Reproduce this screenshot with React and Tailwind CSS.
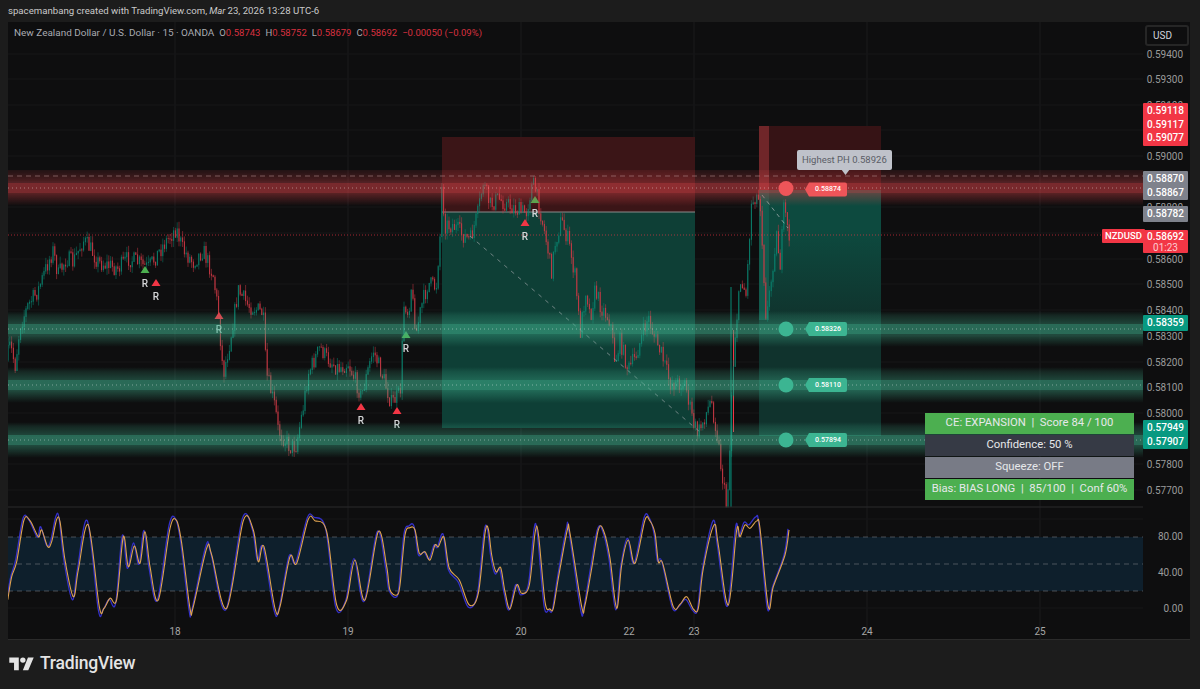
import React from "react";

const font = { fontFamily: '"Roboto", "Liberation Sans", sans-serif' };

// hand traced price path, page pixels
const pricePath = [
  [8, 360], [12, 345], [17, 365], [22, 325], [30, 305], [40, 290], [50, 262], [55, 250], [60, 275], [68, 258],
  [75, 262], [85, 240], [92, 248], [100, 262], [110, 265], [120, 268], [130, 258], [140, 262], [150, 268], [165, 245],
  [178, 228], [185, 250], [195, 262], [205, 250], [215, 275], [220, 310], [225, 375], [232, 340], [240, 290], [250, 305],
  [260, 310], [265, 313], [268, 373], [277, 407], [280, 430], [292, 447], [298, 445], [305, 407], [310, 373], [322, 347],
  [328, 357], [340, 368], [350, 363], [360, 387], [363, 397], [375, 350], [385, 377], [393, 403], [402, 393], [406, 300],
  [410, 313], [413, 287], [418, 333], [423, 307], [430, 283], [438, 287], [442, 233], [443, 182], [447, 225], [455, 225],
  [465, 235], [472, 240], [480, 212], [485, 182], [492, 205], [500, 198], [510, 205], [520, 210], [528, 212], [535, 180],
  [543, 215], [550, 250], [553, 273], [557, 243], [563, 220], [570, 240], [577, 277], [582, 333], [588, 287], [592, 317],
  [597, 290], [603, 307], [612, 320], [617, 363], [622, 340], [630, 370], [637, 357], [650, 317], [655, 333], [663, 353],
  [672, 383], [687, 383], [695, 423], [700, 433], [713, 400], [720, 440], [722, 460], [728, 505], [731, 470], [733, 400],
  [737, 333], [743, 277], [748, 295], [753, 205], [757, 195], [762, 200], [768, 320], [773, 280], [778, 233], [782, 263],
  [786, 205], [790, 235],
];

let seed = 7;
const rnd = () => {
  seed = (seed * 16807) % 2147483647;
  return seed / 2147483647;
};

const priceAt = (x) => {
  for (let i = 1; i < pricePath.length; i++) {
    if (x <= pricePath[i][0]) {
      const [x0, y0] = pricePath[i - 1];
      const [x1, y1] = pricePath[i];
      return y0 + ((y1 - y0) * (x - x0)) / (x1 - x0);
    }
  }
  return 235;
};

const candles = [];
let prevClose = priceAt(8);
for (let x = 8; x < 790; x += 1.8) {
  const close = priceAt(x + 1.8) + (rnd() - 0.5) * 17;
  const open = prevClose;
  const high = Math.max(Math.min(open, close) - rnd() * 7, 176);
  const low = Math.min(Math.max(open, close) + rnd() * 7, 507);
  candles.push({ x, open: Math.max(open, 178), close: Math.max(close, 178), high, low });
  prevClose = close;
}

// stochastic traced in two zoomed pieces
const oscLeft = [
  [24, 295], [35, 230], [50, 185], [72, 60], [90, 62], [115, 110], [125, 90], [143, 140], [155, 125], [170, 58],
  [180, 65], [195, 180], [220, 290], [235, 210], [265, 75], [298, 320], [312, 325], [330, 295], [350, 298], [370, 110],
  [385, 200], [403, 138], [420, 190], [435, 95], [450, 200], [475, 300], [510, 85], [530, 62], [545, 130], [570, 325],
  [580, 320], [620, 145], [635, 165], [680, 325], [730, 62], [760, 90], [775, 185], [792, 140], [825, 325], [840, 320],
  [870, 170], [890, 190], [925, 58], [945, 62], [980, 95], [1010, 315], [1040, 300], [1065, 180], [1095, 300], [1135, 95],
  [1160, 200], [1170, 270], [1190, 285],
].map(([a, b]) => [a / 3, 500 + b / 3]);

const oscRight = [
  [30, 240], [45, 90], [60, 68], [75, 75], [88, 145], [105, 140], [120, 165], [135, 120], [145, 125], [162, 97],
  [178, 190], [208, 225], [238, 300], [265, 265], [285, 85], [295, 72], [305, 150], [318, 200], [332, 188], [345, 260],
  [360, 312], [380, 240], [395, 265], [418, 240], [435, 85], [445, 85], [465, 290], [480, 312], [490, 310], [505, 220],
  [532, 75], [540, 85], [575, 305], [585, 300], [605, 190], [625, 75], [640, 75], [660, 160], [680, 310], [695, 180],
  [715, 105], [735, 175], [765, 45], [780, 48], [795, 85], [805, 170], [818, 175], [850, 305], [870, 298], [890, 275],
  [910, 312], [925, 310], [940, 190], [972, 60], [985, 120], [1015, 300], [1040, 75], [1050, 95], [1065, 60], [1080, 70],
  [1100, 48], [1110, 70], [1135, 305], [1150, 245], [1185, 150], [1197, 75],
].map(([a, b]) => [390 + a / 3, 505 + b / 3]);

const oscPoints = [[8, 597], ...oscLeft, ...oscRight];

const smooth = (pts) => {
  let d = `M${pts[0][0]} ${pts[0][1]}`;
  for (let i = 0; i < pts.length - 1; i++) {
    const p0 = pts[i - 1] || pts[i];
    const p1 = pts[i];
    const p2 = pts[i + 1];
    const p3 = pts[i + 2] || p2;
    const c1x = p1[0] + (p2[0] - p0[0]) / 6;
    const c1y = p1[1] + (p2[1] - p0[1]) / 6;
    const c2x = p2[0] - (p3[0] - p1[0]) / 6;
    const c2y = p2[1] - (p3[1] - p1[1]) / 6;
    d += ` C${c1x.toFixed(1)} ${c1y.toFixed(1)} ${c2x.toFixed(1)} ${c2y.toFixed(1)} ${p2[0].toFixed(1)} ${p2[1].toFixed(1)}`;
  }
  return d;
};

const oscBlue = oscPoints.map(([x, y]) => [
  x - 1,
  Math.min(610, Math.max(517, 564 + (y - 564) * 1.06 + (rnd() - 0.5) * 4)),
]);

const axisPrices = [
  ["0.59400", 55], ["0.59300", 80], ["0.59100", 106], ["0.59000", 157], ["0.58800", 208], ["0.58600", 260],
  ["0.58500", 285], ["0.58400", 311], ["0.58300", 337], ["0.58200", 363], ["0.58100", 388], ["0.58000", 414],
  ["0.57800", 465], ["0.57700", 491], ["80.00", 537], ["40.00", 573], ["0.00", 609],
];

const days = [["18", 175], ["19", 348], ["20", 521], ["22", 629], ["23", 694], ["24", 867], ["25", 1040]];
const gridY = [54, 79, 105, 130, 156, 182, 207, 233, 259, 284, 310, 336, 362, 387, 413, 438, 464, 490, 519, 572, 608];
const gridX = [175, 348, 521, 694, 867, 1040];

const markers = [
  { x: 145, y: 270, c: "#4caf50" },
  { x: 156, y: 283, c: "#f23645" },
  { x: 219, y: 316, c: "#f23645" },
  { x: 361, y: 407, c: "#f23645" },
  { x: 397, y: 411, c: "#f23645" },
  { x: 406, y: 335, c: "#4caf50" },
  { x: 525, y: 223, c: "#f23645" },
  { x: 535, y: 200, c: "#4caf50" },
];

const greenBands = [329, 385, 440];
const zoneTags = [
  { y: 329, text: "0.58326" },
  { y: 385, text: "0.58110" },
  { y: 440, text: "0.57894" },
];

const Band = ({ y, fill }) => (
  <g>
    <rect x="8" y={y - 18} width="1135" height="36" fill={`url(#${fill})`} />
    <line x1="8" x2="1143" y1={y} y2={y} stroke="#ffffff" strokeOpacity="0.4" strokeDasharray="1 3" />
  </g>
);

const ChartDrawing = () => (
  <svg viewBox="8 22 1135 618" width="1135" height="618" className="block absolute inset-0 blur-[0.5px]">
    <defs>
      <linearGradient id="greenBand" x1="0" y1="0" x2="0" y2="1">
        <stop offset="0" stopColor="#3fae8b" stopOpacity="0" />
        <stop offset="0.12" stopColor="#3fae8b" stopOpacity="0.16" />
        <stop offset="0.35" stopColor="#3fae8b" stopOpacity="0.34" />
        <stop offset="0.37" stopColor="#3fae8b" stopOpacity="0.58" />
        <stop offset="0.63" stopColor="#3fae8b" stopOpacity="0.58" />
        <stop offset="0.65" stopColor="#3fae8b" stopOpacity="0.38" />
        <stop offset="1" stopColor="#3fae8b" stopOpacity="0" />
      </linearGradient>
      <linearGradient id="redBand" x1="0" y1="0" x2="0" y2="1">
        <stop offset="0" stopColor="#dc4449" stopOpacity="0.1" />
        <stop offset="0.35" stopColor="#dc4449" stopOpacity="0.32" />
        <stop offset="0.37" stopColor="#dc4449" stopOpacity="0.52" />
        <stop offset="0.63" stopColor="#dc4449" stopOpacity="0.52" />
        <stop offset="0.65" stopColor="#dc4449" stopOpacity="0.36" />
        <stop offset="1" stopColor="#dc4449" stopOpacity="0" />
      </linearGradient>
      <linearGradient id="rightBox" x1="0" y1="190" x2="0" y2="320" gradientUnits="userSpaceOnUse">
        <stop offset="0.3" stopColor="#0d4a3f" />
        <stop offset="1" stopColor="#10332d" />
      </linearGradient>
    </defs>

    {gridX.map((x) => (
      <line key={x} x1={x} x2={x} y1="22" y2="640" stroke="#1b1b1d" />
    ))}
    {gridY.map((y) => (
      <line key={y} x1="8" x2="1143" y1={y} y2={y} stroke="#171719" />
    ))}

    {/* trade boxes */}
    <rect x="442" y="137" width="253" height="75" fill="#3b1517" />
    <rect x="442" y="212" width="253" height="216" fill="#0e3f36" />
    <line x1="442" x2="695" y1="212" y2="212" stroke="#8b8b8b" />
    <rect x="759" y="126" width="122" height="64" fill="#361315" />
    <rect x="759" y="126" width="10" height="64" fill="#702629" />
    <rect x="759" y="190" width="122" height="246" fill="url(#rightBox)" />
    <rect x="759" y="190" width="10" height="130" fill="#12594c" />

    {/* oscillator pane */}
    <rect x="8" y="537" width="1135" height="54" fill="#0e1f2c" />
    {[537, 564, 591].map((y) => (
      <line key={y} x1="8" x2="1143" y1={y} y2={y} stroke="#74787f" strokeDasharray="5 4" strokeOpacity="0.6" />
    ))}
    <path d={smooth(oscBlue)} fill="none" stroke="#3430c8" strokeWidth="1.3" />
    <path d={smooth(oscPoints)} fill="none" stroke="#dfa350" strokeWidth="1.1" />

    {/* candles */}
    <line x1="731" x2="731" y1="287" y2="507" stroke="#089981" strokeWidth="0.9" />
    <line x1="733.5" x2="733.5" y1="330" y2="432" stroke="#f23645" strokeWidth="1" />
    {candles.map((c) => {
      const color = c.close < c.open ? "#0a8571" : "#cf3a46";
      return (
        <g key={c.x}>
          <line x1={c.x} x2={c.x} y1={c.high} y2={c.low} stroke={color} strokeWidth="0.5" />
          <line
            x1={c.x}
            x2={c.x}
            y1={Math.min(c.open, c.close)}
            y2={Math.max(c.open, c.close) + 0.6}
            stroke={color}
            strokeWidth="0.9"
          />
        </g>
      );
    })}

    <polyline points="470,236 700,432" fill="none" stroke="#9aa3a5" strokeOpacity="0.7" strokeDasharray="4 5" />
    <polyline points="762,195 788,228" fill="none" stroke="#b4b8ba" strokeOpacity="0.7" strokeDasharray="4 4" />

    {/* retest markers */}
    {markers.map((m) => (
      <g key={m.x}>
        <polygon points={`${m.x},${m.y - 4} ${m.x + 4.5},${m.y + 3} ${m.x - 4.5},${m.y + 3}`} fill={m.c} />
        <text x={m.x} y={m.y + 17} textAnchor="middle" fontSize="10" fontWeight="500" fill="#d5d6d8" style={font}>
          R
        </text>
      </g>
    ))}

    {/* zones */}
    <line x1="8" x2="1143" y1="176" y2="176" stroke="#b9b2b2" strokeOpacity="0.5" strokeDasharray="5 4" />
    <Band y={188} fill="redBand" />
    {greenBands.map((y) => (
      <Band key={y} y={y} fill="greenBand" />
    ))}

    <line x1="8" x2="1102" y1="235" y2="235" stroke="#f23645" strokeOpacity="0.65" strokeDasharray="1 2" />
    <line x1="8" x2="1143" y1="507" y2="507" stroke="#2a2a2c" />

    <circle cx="786" cy="188.5" r="7.5" fill="#ee5559" />
    {greenBands.map((y) => (
      <circle key={y} cx="786" cy={y} r="7.5" fill="#3cb592" />
    ))}
    <path d="M809 182.500h36a2 2 0 0 1 2 2v10a2 2 0 0 1-2 2h-36l-4-7z" fill="#ee5559" />
    {greenBands.map((y) => (
      <path key={y} d={`M809 ${y - 7}h36a2 2 0 0 1 2 2v10a2 2 0 0 1-2 2h-36l-4-7z`} fill="#3cb592" />
    ))}
    <path d="M841 169h9l-4.500 6z" fill="#bfc2ca" />
  </svg>
);

const ZoneTag = ({ y, text }) => (
  <span
    className="absolute left-[801px] w-[38px] text-center text-[7px] leading-[14px] font-medium text-white"
    style={{ top: y - 29 }}
  >
    {text}
  </span>
);

const Stat = ({ className, children }) => (
  <div className={`flex h-[21px] items-center justify-center whitespace-pre text-[11.3px] ${className}`}>{children}</div>
);

const PriceStack = ({ top, bg, values, sub }) => (
  <div className={`absolute left-0 w-[45px] rounded-[1px] py-[1px] text-center text-white ${bg}`} style={{ top }}>
    {values.map((v) => (
      <div key={v} className={`text-[10px] font-medium ${sub ? "leading-[12px]" : "leading-[13.500px]"}`}>
        {v}
      </div>
    ))}
    {sub && <div className="text-[10px] leading-[9px] text-white/75">{sub}</div>}
  </div>
);

export default function App() {
  return (
    <div className="flex h-screen w-full flex-col overflow-hidden bg-[#1c1c1c]" style={font}>
      <div className="flex h-[22px] items-center pl-[8px] text-[9.65px] text-[#c9c9c9]">
        spacemanbang created with TradingView.com, <i className="mx-[2px]">Mar</i> 23, 2026 13:28 UTC-6
      </div>

      <div className="ml-[8px] mr-[10px] flex h-[618px] border-b border-[#2b2b2b] bg-[#0e0e0f]">
        <div className="relative w-[1135px]">
          <ChartDrawing />

          <div className="absolute left-[6px] top-[5px] flex gap-[5px] whitespace-pre text-[9.5px] leading-[12px] text-[#a9abb1]">
            <span className="text-[9.95px]">New Zealand Dollar / U.S. Dollar · 15 · OANDA</span>
            <span>
              O<span className="text-[#d8303f]">0.58743</span>
            </span>
            <span>
              H<span className="text-[#d8303f]">0.58752</span>
            </span>
            <span>
              L<span className="text-[#d8303f]">0.58679</span>
            </span>
            <span>
              C<span className="text-[#d8303f]">0.58692</span>
            </span>
            <span className="text-[#d8303f]">−0.00050 (−0.09%)</span>
          </div>

          <div className="absolute left-[789px] top-[128px] rounded-[2px] bg-[#bfc2ca] px-[5px] text-[9.5px] leading-[20px] whitespace-nowrap text-[#5a5d66]">
            Highest PH 0.58926
          </div>
          <ZoneTag y={188.5} text="0.58874" />
          {zoneTags.map((t) => (
            <ZoneTag key={t.y} y={t.y} text={t.text} />
          ))}

          <div className="absolute left-[1094px] top-[207px] rounded-[1px] bg-[#f23645] px-[3px] text-[9.500px] leading-[14px] font-medium text-white">
            NZDUSD
          </div>

          {/* status table */}
          <div className="absolute left-[917px] top-[391px] flex w-[209px] flex-col gap-[1px] text-[#e6e8ea]">
            <Stat className="bg-[#4caf50]">CE: EXPANSION  |  Score 84 / 100</Stat>
            <Stat className="bg-[#363a45]">Confidence: 50 %</Stat>
            <Stat className="bg-[#787b86]">Squeeze: OFF</Stat>
            <Stat className="bg-[#4caf50]">Bias: BIAS LONG  |  85/100  |  Conf 60%</Stat>
          </div>

          {days.map(([label, x]) => (
            <span
              key={x}
              className="absolute top-[604px] w-[20px] text-center text-[10px] leading-[12px] text-[#a6a6a6]"
              style={{ left: x - 18 }}
            >
              {label}
            </span>
          ))}
        </div>

        <div className="relative flex-1">
          <div className="absolute left-[2px] top-[3px] h-[21px] w-[44px] rounded-[3px] border-2 border-[#262626] pl-[6px] text-[10px] leading-[17px] text-[#d1d4dc]">
            USD
          </div>
          {axisPrices.map(([label, y]) => (
            <span
              key={label}
              className="absolute w-[47px] pr-[7px] text-right text-[10px] leading-[12px] text-[#9b9b9b]"
              style={{ top: y - 28 }}
            >
              {label}
            </span>
          ))}
          <PriceStack top={81} bg="bg-[#f23645]" values={["0.59118", "0.59117", "0.59077"]} />
          <PriceStack top={149} bg="bg-[#7f828c]" values={["0.58870", "0.58867"]} />
          <PriceStack top={184} bg="bg-[#7f828c]" values={["0.58782"]} />
          <PriceStack top={208} bg="bg-[#f23645]" values={["0.58692"]} sub="01:23" />
          <PriceStack top={293} bg="bg-[#089981]" values={["0.58359"]} />
          <PriceStack top={398} bg="bg-[#089981]" values={["0.57949", "0.57907"]} />
        </div>
      </div>

      <div className="flex flex-1 items-center gap-[6px] pl-[9px] pb-[2px]">
        <svg viewBox="0 0 36 28" width="25" height="19" fill="#e4e4e4">
          <path d="M14 24H7V13H0V5h14v19zM28 24h-8l7.500-19H36L28 24z" />
          <circle cx="20" cy="9" r="4" />
        </svg>
        <span className="text-[17.5px] font-medium tracking-[-0.2px] text-[#e4e4e4]">TradingView</span>
      </div>
    </div>
  );
}
